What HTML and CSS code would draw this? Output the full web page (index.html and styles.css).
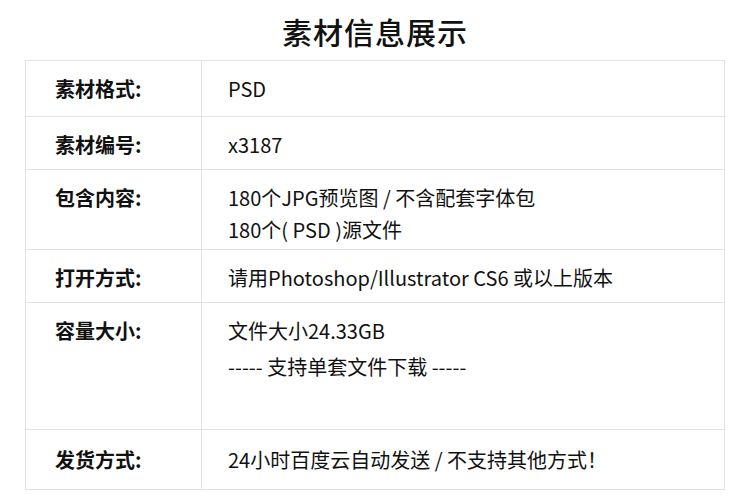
FILE: index.html
```html
<!DOCTYPE html>
<html lang="zh-CN">
<head>
<meta charset="utf-8">
<title>素材信息展示</title>
<link rel="stylesheet" href="styles.css">
</head>
<body>
<div class="page">
  <h1 class="title">素材信息展示</h1>
  <div class="info">
    <div class="row r1">
      <div class="label">素材格式:</div>
      <div class="value">PSD</div>
    </div>
    <div class="row r2">
      <div class="label">素材编号:</div>
      <div class="value">x3187</div>
    </div>
    <div class="row r3">
      <div class="label">包含内容:</div>
      <div class="value"><p>180个JPG预览图 / 不含配套字体包</p><p>180个( PSD )源文件</p></div>
    </div>
    <div class="row r4">
      <div class="label">打开方式:</div>
      <div class="value">请用Photoshop/Illustrator CS6 或以上版本</div>
    </div>
    <div class="row r5">
      <div class="label">容量大小:</div>
      <div class="value wide"><p>文件大小24.33GB</p><p>----- 支持单套文件下载 -----</p></div>
    </div>
    <div class="row r6">
      <div class="label">发货方式:</div>
      <div class="value">24小时百度云自动发送 / 不支持其他方式！</div>
    </div>
  </div>
</div>
</body>
</html>
```

FILE: styles.css
```css
* { box-sizing: border-box; }
html, body { margin: 0; padding: 0; background: #fff; }
body {
  font-family: "Noto Sans CJK SC", "Noto Sans", sans-serif;
  color: #111;
}
.page { width: 750px; height: 500px; padding: 0 25px; }
.title {
  margin: 0;
  height: 60px;
  line-height: 62px;
  text-align: center;
  font-size: 30px;
  font-weight: 500;
  letter-spacing: 1px;
}
.info {
  border: 1px solid #e3e3e3;
  border-bottom: none;
}
.row {
  display: grid;
  grid-template-columns: 176px 1fr;
  border-bottom: 1px solid #e3e3e3;
}
.label {
  border-right: 1px solid #e3e3e3;
  padding: 12px 0 0 29px;
  font-size: 20px;
  font-weight: 700;
  line-height: 32px;
}
.value {
  padding: 12px 0 0 26px;
  font-size: 20px;
  line-height: 32px;
}
.value p { margin: 0; }
.value.wide { line-height: 36px; padding-top: 10px; }
.r1 { height: 56px; }
.r2 { height: 53px; }
.r3 { height: 80px; }
.r4 { height: 53px; }
.r5 { height: 127px; }
.r6 { height: 60px; }
.r6 .label, .r6 .value { padding-top: 14px; }
```
